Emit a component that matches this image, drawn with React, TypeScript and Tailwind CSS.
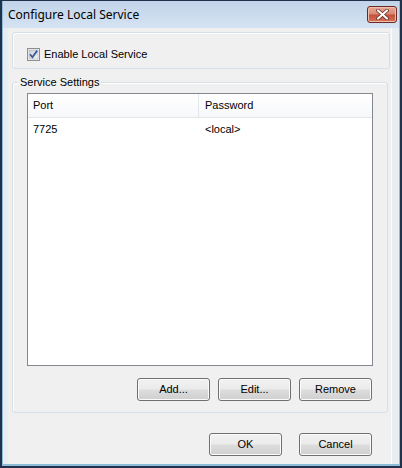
import React from "react";

const BUTTON =
  "h-[23px] w-[73px] flex items-center justify-center rounded-[3px] border border-[#707070] bg-[linear-gradient(#f2f2f2,#ebebeb_48%,#dddddd_52%,#cfcfcf)] shadow-[inset_0_0_0_1px_#fbfbfb] text-[11px] text-black";

function CheckBox() {
  return (
    <svg width="13" height="13" viewBox="0 0 13 13" className="shrink-0">
      <defs>
        <linearGradient id="cbg" x1="0" y1="0" x2="1" y2="1">
          <stop offset="0" stopColor="#cbcfd5" />
          <stop offset="1" stopColor="#f6f6f6" />
        </linearGradient>
      </defs>
      <rect x="0.5" y="0.5" width="12" height="12" fill="#f4f4f4" stroke="#8e8f8f" />
      <rect x="2" y="2" width="9" height="9" fill="url(#cbg)" stroke="#aeb3b9" strokeWidth="0.6" />
      <path d="M3 6.3 L5.4 9.2 L10.2 2.6" fill="none" stroke="#3c5b9c" strokeWidth="1.8" />
    </svg>
  );
}

function CloseButton() {
  return (
    <div className="h-[17px] w-[30px] flex items-center justify-center rounded-[3px] border border-[#6b2a20] bg-[linear-gradient(#e9a895,#d88a74_45%,#c5503a_55%,#d3755d)] shadow-[inset_0_0_0_1px_#f0bfae]">
      <svg width="13" height="11" viewBox="0 0 13 11">
        <path d="M2 1.5 L11 9.5 M11 1.5 L2 9.5" stroke="#5a2419" strokeWidth="3.6" strokeLinecap="round" />
        <path d="M2 1.5 L11 9.5 M11 1.5 L2 9.5" stroke="#ffffff" strokeWidth="2.2" strokeLinecap="round" />
      </svg>
    </div>
  );
}

export default function App() {
  return (
    <div className="w-[402px] h-[468px] flex flex-col border-x-2 border-b-2 border-t border-[#22324a] bg-[#f0f0f0] font-['Liberation_Sans',Arial,sans-serif] text-[11px] text-black">
      <div className="flex-1 flex flex-col border-x border-b-2 border-[#8dbbd9]">
        {/* title bar */}
        <div className="h-[27px] flex items-center justify-between pl-[5px] pr-[2px] bg-[linear-gradient(#c2d4ea,#d5e2f2)]">
          <span className="text-[12px] font-['Noto_Sans',sans-serif] text-black">Configure Local Service</span>
          <CloseButton />
        </div>

        <div className="flex-1 flex">
          <div className="w-[5px] bg-[#e8edf2]" />
          <div className="flex-1 flex flex-col pl-[4px]">
            {/* enable group */}
            <div className="mt-[4px] w-[378px] h-[37px] flex items-start gap-[4px] pl-[14px] pt-[15px] rounded-[3px] border border-[#d5dfe5] shadow-[inset_1px_1px_0_#ffffff]">
              <CheckBox />
              <span className="leading-[13px]">Enable Local Service</span>
            </div>

            {/* service settings group */}
            <div className="relative mt-[13px] w-[376px] flex flex-col pl-[14px] pt-[10px] pb-[11px] rounded-[3px] border border-[#d5dfe5] shadow-[inset_1px_1px_0_#ffffff]">
              <span className="absolute -top-[7px] left-[5px] px-[2px] bg-[#f0f0f0] leading-[13px]">Service Settings</span>

              <div className="w-[346px] h-[273px] flex flex-col border border-[#828790] bg-white">
                <div className="h-[24px] flex border-b border-[#e5e5e5] bg-[linear-gradient(#ffffff,#f7f8fa)]">
                  <div className="w-[171px] flex items-center pl-[5px] border-r border-[#e3e8ee]">Port</div>
                  <div className="flex-1 flex items-center pl-[6px]">Password</div>
                </div>
                <div className="h-[20px] mt-[1px] flex items-center">
                  <div className="w-[172px] pl-[5px]">7725</div>
                  <div className="flex-1 pl-[5px]">&lt;local&gt;</div>
                </div>
              </div>

              <div className="w-[345px] mt-[12px] flex justify-end gap-[8px]">
                <button className={BUTTON}>Add...</button>
                <button className={BUTTON}>Edit...</button>
                <button className={BUTTON}>Remove</button>
              </div>
            </div>

            <div className="w-[360px] mt-[20px] flex justify-end gap-[17px]">
              <button className={BUTTON}>OK</button>
              <button className={BUTTON}>Cancel</button>
            </div>
          </div>
          <div className="w-[8px] bg-[#e8edf2] border-l border-[#fafbfc]" />
        </div>
      </div>
    </div>
  );
}
